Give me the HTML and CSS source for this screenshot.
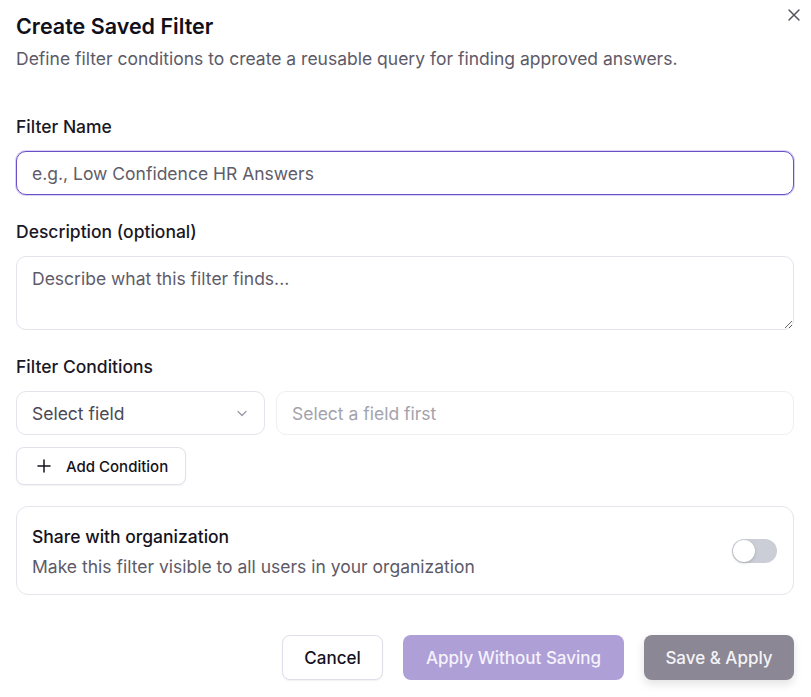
FILE: index.html
```html
<!DOCTYPE html>
<html>
<head>
<meta charset="utf-8">
<title>Create Saved Filter</title>
<link rel="stylesheet" href="styles.css">
</head>
<body>
<div class="dialog">
    <button class="close-btn" type="button" aria-label="Close">
        <svg width="14" height="14" viewBox="0 0 14 14" fill="none" stroke="currentColor" stroke-width="1.5" stroke-linecap="round">
            <path d="M2 2L12 12M12 2L2 12"/>
        </svg>
    </button>

    <div class="dialog-header">
        <h2 class="dialog-title">Create Saved Filter</h2>
        <p class="dialog-desc">Define filter conditions to create a reusable query for finding approved answers.</p>
    </div>

    <div class="field">
        <label class="field-label" for="filterName">Filter Name</label>
        <input type="text" id="filterName" class="text-input is-focused" placeholder="e.g., Low Confidence HR Answers">
    </div>

    <div class="field">
        <label class="field-label" for="filterDesc">Description (optional)</label>
        <textarea id="filterDesc" class="text-input text-area" placeholder="Describe what this filter finds..."></textarea>
    </div>

    <div class="field">
        <div class="field-label">Filter Conditions</div>
        <div class="condition-row">
            <button class="select-box" type="button">
                <span>Select field</span>
                <svg width="14" height="14" viewBox="0 0 14 14" fill="none" stroke="currentColor" stroke-width="1.2" stroke-linecap="round" stroke-linejoin="round">
                    <path d="M3 5.5L7 9.5L11 5.5"/>
                </svg>
            </button>
            <input type="text" class="text-input value-input" placeholder="Select a field first" disabled>
        </div>
        <button class="add-btn" type="button">
            <svg width="16" height="16" viewBox="0 0 16 16" fill="none" stroke="currentColor" stroke-width="1.5" stroke-linecap="round">
                <path d="M8 2V14M2 8H14"/>
            </svg>
            Add Condition
        </button>
    </div>

    <div class="share-card">
        <div class="share-text">
            <div class="share-title">Share with organization</div>
            <div class="share-sub">Make this filter visible to all users in your organization</div>
        </div>
        <span class="toggle"><span class="toggle-knob"></span></span>
    </div>

    <div class="dialog-footer">
        <button class="btn btn-outline" type="button">Cancel</button>
        <button class="btn btn-primary" type="button">Apply Without Saving</button>
        <button class="btn btn-dark" type="button">Save &amp; Apply</button>
    </div>
</div>
</body>
</html>
```

FILE: styles.css
```css
* {
    box-sizing: border-box;
}

body {
    margin: 0;
    background-color: #fff;
    font-family: Inter, "Liberation Sans", sans-serif;
    color: #14121c;
}

.dialog {
    position: relative;
    width: 811px;
    padding: 12px 17px 16px 16px;
}

.close-btn {
    position: absolute;
    top: 8px;
    right: 10px;
    padding: 0;
    border: none;
    background: none;
    color: #55535f;
    cursor: pointer;
    display: flex;
}

.dialog-header {
    margin-bottom: 44px;
}

.dialog-title {
    margin: 0;
    font-size: 21.5px;
    line-height: 28px;
    font-weight: 600;
    color: #110f1a;
}

.dialog-desc {
    margin: 7px 0 0;
    font-size: 17.5px;
    line-height: 24px;
    color: #5d5a68;
}

.field {
    margin-bottom: 25px;
}

.field-label {
    display: block;
    margin-bottom: 12px;
    font-size: 17.5px;
    line-height: 24px;
    font-weight: 500;
    color: #1a1726;
}

.text-input {
    display: block;
    width: 100%;
    height: 44px;
    padding: 0 15px;
    border: 1px solid #e4e2eb;
    border-radius: 10px;
    background: #fff;
    font-family: inherit;
    font-size: 17.5px;
    color: #1a1726;
    outline: none;
}

.text-input::placeholder {
    color: #5f5c6a;
}

.is-focused {
    border: 1.5px solid #6a4fc9;
    box-shadow: 0 0 0 1px rgba(106, 79, 201, 0.25);
}

.text-area {
    height: 74px;
    padding: 10px 15px;
    line-height: 24px;
    resize: vertical;
}

.condition-row {
    display: flex;
    gap: 11px;
}

.select-box {
    flex: 0 0 249px;
    height: 44px;
    display: flex;
    align-items: center;
    justify-content: space-between;
    padding: 0 15px;
    border: 1px solid #e4e2eb;
    border-radius: 10px;
    background: #fff;
    font-family: inherit;
    font-size: 17.5px;
    color: #4b4856;
    cursor: pointer;
}

.select-box svg {
    color: #9997a3;
}

.value-input {
    flex: 1;
    border-color: #efeef3;
}

.value-input::placeholder {
    color: #a4a2ac;
}

.add-btn {
    margin-top: 12px;
    height: 38px;
    display: inline-flex;
    align-items: center;
    gap: 14px;
    padding: 0 17px 0 19px;
    border: 1.5px solid #e2e0ea;
    border-radius: 8px;
    background: #fff;
    font-family: inherit;
    font-size: 15px;
    font-weight: 500;
    color: #14121c;
    box-shadow: 0 1px 2px rgba(20, 18, 28, 0.06);
    cursor: pointer;
}

.share-card {
    margin-top: -4px;
    display: flex;
    align-items: center;
    justify-content: space-between;
    padding: 16px 16px 15px 15px;
    border: 1px solid #e6e4ec;
    border-radius: 12px;
}

.share-title {
    font-size: 17.5px;
    line-height: 28px;
    font-weight: 500;
    color: #14121c;
}

.share-sub {
    margin-top: 4px;
    font-size: 17.5px;
    line-height: 24px;
    color: #5d5a68;
}

.toggle {
    position: relative;
    width: 45px;
    height: 24px;
    border-radius: 12px;
    background-color: #cbced6;
}

.toggle-knob {
    position: absolute;
    top: 1px;
    left: 1px;
    width: 22px;
    height: 22px;
    border-radius: 50%;
    background: #fff;
    box-shadow: 0 1px 3px rgba(0, 0, 0, 0.2);
}

.dialog-footer {
    margin-top: 40px;
    display: flex;
    justify-content: flex-end;
    gap: 20px;
}

.btn {
    height: 45px;
    padding: 0 20px;
    border: none;
    border-radius: 8px;
    font-family: inherit;
    font-size: 17px;
    font-weight: 500;
    cursor: pointer;
}

.btn-outline {
    width: 101px;
    border: 1.5px solid #e0deea;
    background: #fff;
    color: #14121c;
    box-shadow: 0 1px 2px rgba(20, 18, 28, 0.06);
}

.btn-primary {
    width: 221px;
    background-color: #ae9fd7;
    color: #f5f2fb;
}

.btn-dark {
    width: 150px;
    background-color: #8b8794;
    color: #f4f3f6;
    box-shadow: 0 4px 10px rgba(20, 18, 28, 0.12);
}
```
